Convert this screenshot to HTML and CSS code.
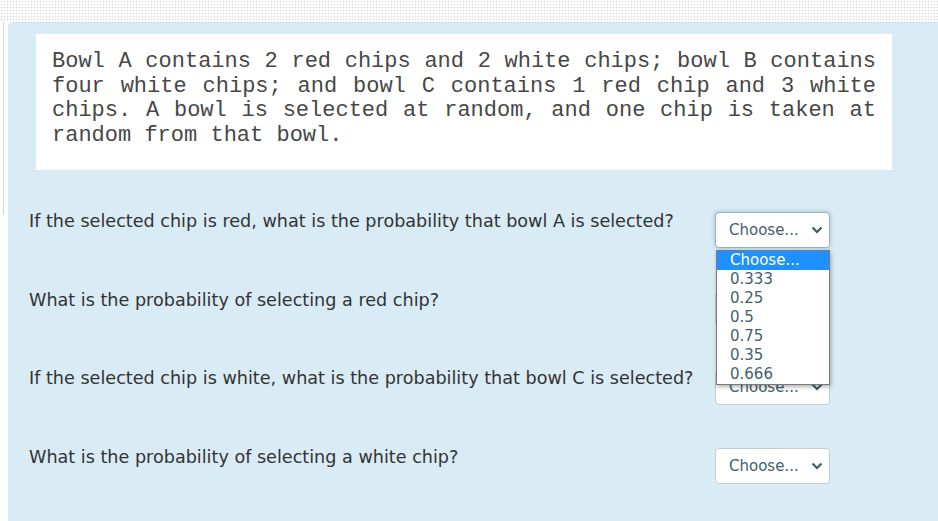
FILE: index.html
```html
<!DOCTYPE html>
<html>
<head>
<meta charset="utf-8">
<link rel="stylesheet" href="styles.css">
</head>
<body>
<div class="topstrip"></div>
<div class="main">
  <div class="rail"><div class="rail-line"></div></div>
  <div class="panel">
    <div class="stem">Bowl A contains 2 red chips and 2 white chips; bowl B contains four white chips; and bowl C contains 1 red chip and 3 white chips. A bowl is selected at random, and one chip is taken at random from that bowl.</div>
    <div class="questions">
      <div class="row">
        <div class="qtext">If the selected chip is red, what is the probability that bowl A is selected?</div>
        <div class="selwrap">
          <div class="select focused"><span>Choose...</span><svg class="chev" width="12" height="8" viewBox="0 0 12 8"><path d="M1.5 1.5 L6 6 L10.5 1.5" fill="none" stroke="#3d5c6b" stroke-width="2.2"/></svg></div>
          <ul class="dropdown">
            <li class="hl">Choose...</li>
            <li>0.333</li>
            <li>0.25</li>
            <li>0.5</li>
            <li>0.75</li>
            <li>0.35</li>
            <li>0.666</li>
          </ul>
        </div>
      </div>
      <div class="row">
        <div class="qtext">What is the probability of selecting a red chip?</div>
        <div class="selwrap">
          <div class="select"><span>Choose...</span><svg class="chev" width="12" height="8" viewBox="0 0 12 8"><path d="M1.5 1.5 L6 6 L10.5 1.5" fill="none" stroke="#3d5c6b" stroke-width="2.2"/></svg></div>
        </div>
      </div>
      <div class="row">
        <div class="qtext">If the selected chip is white, what is the probability that bowl C is selected?</div>
        <div class="selwrap">
          <div class="select"><span>Choose...</span><svg class="chev" width="12" height="8" viewBox="0 0 12 8"><path d="M1.5 1.5 L6 6 L10.5 1.5" fill="none" stroke="#3d5c6b" stroke-width="2.2"/></svg></div>
        </div>
      </div>
      <div class="row">
        <div class="qtext">What is the probability of selecting a white chip?</div>
        <div class="selwrap">
          <div class="select"><span>Choose...</span><svg class="chev" width="12" height="8" viewBox="0 0 12 8"><path d="M1.5 1.5 L6 6 L10.5 1.5" fill="none" stroke="#3d5c6b" stroke-width="2.2"/></svg></div>
        </div>
      </div>
    </div>
  </div>
</div>
</body>
</html>
```
FILE: styles.css
```css
html, body {
  margin: 0;
  padding: 0;
  background: #ffffff;
  overflow: hidden;
}
body {
  width: 938px;
  height: 521px;
  font-family: "DejaVu Sans", Verdana, sans-serif;
}
.topstrip {
  height: 22px;
  background-color: #ffffff;
  background-image: radial-gradient(circle, #dcdcdc 0.8px, transparent 1.1px);
  background-size: 3px 3px;
}
.main {
  display: flex;
  height: 499px;
}
.rail {
  width: 8px;
  flex: none;
}
.rail-line {
  margin-left: 3px;
  width: 1px;
  height: 192px;
  background: #d4d4d4;
}
.panel {
  flex: 1;
  background: #d9ebf5;
  border-top: 1px solid #cfe3ee;
  border-top-left-radius: 6px;
  padding: 11px 46px 0 20px;
}
.stem {
  margin-left: 8px;
  width: 856px;
  box-sizing: border-box;
  background: #ffffff;
  padding: 16px 16px 22px 16px;
  font-family: "Liberation Mono", "Courier New", monospace;
  font-size: 22px;
  line-height: 24.5px;
  color: #474747;
  text-align: justify;
}
.questions {
  margin-top: 42px;
  padding-left: 1px;
  display: flex;
  flex-direction: column;
  gap: 42.7px;
}
.row {
  display: grid;
  grid-template-columns: 686px 115px;
  align-items: start;
  height: 36px;
}
.qtext {
  font-size: 17.6px;
  line-height: 19px;
  color: #333333;
}
.selwrap {
  position: relative;
}
.select {
  box-sizing: border-box;
  height: 36px;
  width: 115px;
  background: #ffffff;
  border: 1px solid #c4ccd2;
  border-radius: 4px;
  display: flex;
  align-items: center;
  justify-content: space-between;
  padding: 0 6px 0 13px;
  font-size: 15px;
  color: #44606e;
}
.select.focused {
  border-color: #9ab0bf;
  box-shadow: 0 0 4px rgba(80, 130, 170, 0.45);
}
.chev {
  display: block;
}
.dropdown {
  position: absolute;
  left: 1px;
  top: 38px;
  width: 114px;
  box-sizing: border-box;
  margin: 0;
  padding: 0;
  list-style: none;
  background: #ffffff;
  border: 1px solid #7a7a7a;
  box-shadow: 1px 2px 4px rgba(0, 0, 0, 0.3);
  font-size: 15px;
  line-height: 19px;
  color: #44606e;
  z-index: 5;
}
.dropdown li {
  padding-left: 13px;
  height: 19px;
}
.dropdown li.hl {
  background: #1e90ff;
  color: #ffffff;
}
```
